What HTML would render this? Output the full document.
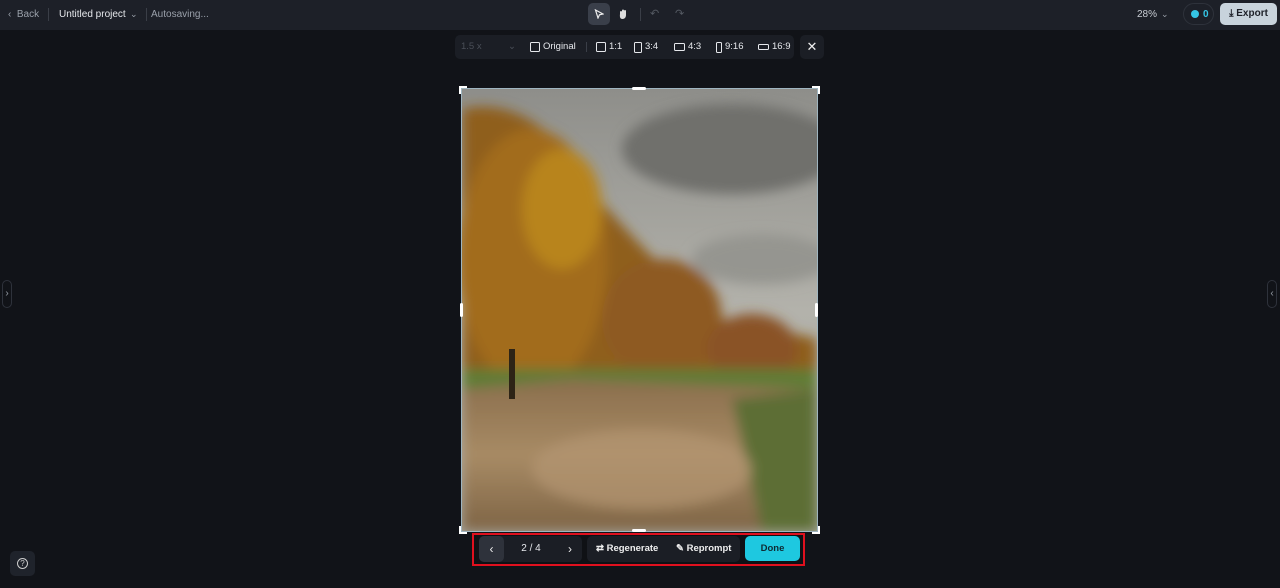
<!DOCTYPE html>
<html><head><meta charset="utf-8"><style>
*{box-sizing:border-box;margin:0;padding:0}
body{width:1280px;height:588px;background:#111318;font-family:"Liberation Sans",sans-serif;position:relative;overflow:hidden;color:#e6e8ec}
.top{position:absolute;left:0;top:0;width:1280px;height:30px;background:#1d2028}
.t{position:absolute;font-size:10px;top:9px}
.sep{position:absolute;top:8px;width:1px;height:13px;background:#3a3e47}
.bar2{position:absolute;left:455px;top:35px;width:339px;height:24px;background:#1b1e25;border-radius:5px}
.x{position:absolute;left:800px;top:35px;width:24px;height:24px;background:#1b1e25;border-radius:5px;color:#eee;font-size:13px;text-align:center;line-height:24px}
.opt{position:absolute;top:41px;font-size:9.5px;color:#e6e8ec;line-height:12px;display:flex;align-items:center}
.ic{display:inline-block;border:1.3px solid #e6e8ec;border-radius:1.5px;margin-right:3px}
.bb{position:absolute;top:536px;height:26px;border-radius:5px}
</style></head><body>
<div class="top"></div>
<div class="t" style="left:8px;color:#9aa0aa">‹ &nbsp;Back</div>
<div class="sep" style="left:48px"></div>
<div class="t" style="left:59px;color:#e6e8ec">Untitled project</div>
<div class="t" style="left:130px;color:#9aa0aa;font-size:9px">⌄</div>
<div class="sep" style="left:146px"></div>
<div class="t" style="left:151px;color:#9aa0aa">Autosaving...</div>
<div style="position:absolute;left:588px;top:3px;width:22px;height:22px;background:#3a3f4a;border-radius:5px"></div>
<svg style="position:absolute;left:594px;top:9px" width="10" height="10" viewBox="0 0 10 10"><path d="M1.5 1L9 5 5.5 5.8 4 9z" fill="none" stroke="#eee" stroke-width="1.2"/></svg>
<svg style="position:absolute;left:618px;top:8px" width="11" height="12" viewBox="0 0 11 12"><path d="M2 6V4a1 1 0 012 0V2.5a1 1 0 012 0V3a1 1 0 012 0v4c0 2.5-1.5 4-3.5 4S1.5 9.5 2 6z" fill="#ddd"/></svg>
<div class="sep" style="left:640px"></div>
<div class="t" style="left:650px;color:#555a63;top:7px;font-size:11px">↶</div>
<div class="t" style="left:675px;color:#555a63;top:7px;font-size:11px">↷</div>
<div class="t" style="left:1137px;color:#c8ccd3">28%</div>
<div class="t" style="left:1161px;color:#9aa0aa;font-size:9px">⌄</div>
<div style="position:absolute;left:1183px;top:3px;width:31px;height:22px;border:1px solid #2e323b;border-radius:11px"></div>
<div style="position:absolute;left:1191px;top:10px;width:8px;height:8px;border-radius:50%;background:#35c6e6"></div>
<div class="t" style="left:1203px;color:#35c6e6;font-weight:bold">0</div>
<div style="position:absolute;left:1220px;top:3px;width:57px;height:22px;background:#c8d3dc;border-radius:5px;color:#1d2028;font-size:10px;font-weight:bold;line-height:22px;text-align:center">⤓ Export</div>

<div class="bar2"></div>
<div class="opt" style="left:461px;color:#4a4f58">1.5 x</div>
<div class="opt" style="left:508px;color:#4a4f58">⌄</div>
<div class="opt" style="left:530px"><span class="ic" style="width:10px;height:10px"></span>Original</div>
<div class="sep" style="left:586px;top:42px;height:10px"></div>
<div class="opt" style="left:596px"><span class="ic" style="width:10px;height:10px"></span>1:1</div>
<div class="opt" style="left:634px"><span class="ic" style="width:8px;height:11px"></span>3:4</div>
<div class="opt" style="left:674px"><span class="ic" style="width:11px;height:8px"></span>4:3</div>
<div class="opt" style="left:716px"><span class="ic" style="width:6px;height:11px"></span>9:16</div>
<div class="opt" style="left:758px"><span class="ic" style="width:11px;height:6px"></span>16:9</div>
<div class="x">✕</div>

<svg style="position:absolute;left:462px;top:89px" width="355" height="442" viewBox="0 0 355 442">
<defs><filter id="b" x="-20%" y="-20%" width="140%" height="140%"><feGaussianBlur stdDeviation="6"/></filter>
<linearGradient id="sky" x1="0" y1="0" x2="0" y2="1"><stop offset="0" stop-color="#8e8e8a"/><stop offset=".5" stop-color="#b3b2ab"/><stop offset="1" stop-color="#a8a79f"/></linearGradient>
<linearGradient id="road" x1="0" y1="0" x2="0" y2="1"><stop offset="0" stop-color="#8a6e4c"/><stop offset=".5" stop-color="#a88b65"/><stop offset="1" stop-color="#7e6445"/></linearGradient></defs>
<rect width="355" height="442" fill="url(#sky)"/>
<g filter="url(#b)">
<ellipse cx="270" cy="60" rx="110" ry="45" fill="#6f6f6c"/>
<ellipse cx="300" cy="170" rx="70" ry="25" fill="#959590"/>
<path d="M0 20 C40 10 90 30 120 90 C170 150 220 200 260 230 C300 240 340 245 355 250 L355 300 L0 300Z" fill="#8f5f1c"/>
<ellipse cx="70" cy="170" rx="75" ry="130" fill="#a26c1e"/>
<ellipse cx="100" cy="120" rx="40" ry="60" fill="#b8841f"/>
<ellipse cx="200" cy="230" rx="60" ry="60" fill="#8e5a22"/>
<ellipse cx="290" cy="260" rx="45" ry="35" fill="#8a5226"/>
<path d="M0 280 L355 280 L355 315 L0 315Z" fill="#5f7d36"/>
<path d="M0 300 L110 290 L355 300 L355 442 L0 442Z" fill="url(#road)"/>
<path d="M270 310 L355 300 L355 442 L300 442Z" fill="#5d6e35"/>
<ellipse cx="180" cy="380" rx="110" ry="40" fill="#b39672" opacity=".7"/>
</g>
<rect x="47" y="260" width="6" height="50" fill="#2d2416"/>
</svg>
<div style="position:absolute;left:461px;top:88px;width:357px;height:444px;border:1px solid #9fb5c0"></div>
<div style="position:absolute;left:459px;top:86px;width:8px;height:8px;border-left:2px solid #fff;border-top:2px solid #fff"></div>
<div style="position:absolute;left:812px;top:86px;width:8px;height:8px;border-right:2px solid #fff;border-top:2px solid #fff"></div>
<div style="position:absolute;left:459px;top:526px;width:8px;height:8px;border-left:2px solid #fff;border-bottom:2px solid #fff"></div>
<div style="position:absolute;left:812px;top:526px;width:8px;height:8px;border-right:2px solid #fff;border-bottom:2px solid #fff"></div>
<div style="position:absolute;left:632px;top:87px;width:14px;height:3px;background:#fff;border-radius:2px"></div>
<div style="position:absolute;left:632px;top:529px;width:14px;height:3px;background:#fff;border-radius:2px"></div>
<div style="position:absolute;left:460px;top:303px;width:3px;height:14px;background:#fff;border-radius:2px"></div>
<div style="position:absolute;left:815px;top:303px;width:3px;height:14px;background:#fff;border-radius:2px"></div>

<div style="position:absolute;left:472px;top:533px;width:333px;height:33px;border:2.5px solid #e0101e;background:#0f1115"></div>
<div class="bb" style="left:479px;width:103px;background:#1b1e25"></div>
<div class="bb" style="left:479px;width:25px;background:#2e323b;color:#eee;text-align:center;line-height:26px;font-size:12px">‹</div>
<div class="bb" style="left:504px;width:54px;color:#e6e8ec;text-align:center;line-height:26px;font-size:10px">2 / 4</div>
<div class="bb" style="left:558px;width:24px;color:#eee;text-align:center;line-height:26px;font-size:12px">›</div>
<div class="bb" style="left:587px;width:153px;background:#1b1e25"></div>
<div class="bb" style="left:596px;color:#eee;line-height:26px;font-size:9.5px;font-weight:bold">⇄ Regenerate</div>
<div class="bb" style="left:676px;color:#eee;line-height:26px;font-size:9.5px;font-weight:bold">✎ Reprompt</div>
<div class="bb" style="left:745px;width:55px;height:25px;background:#1ec8e0;color:#0e2a33;text-align:center;line-height:25px;font-size:9.5px;font-weight:bold">Done</div>

<div style="position:absolute;left:2px;top:280px;width:10px;height:28px;border:1px solid #2e323b;border-radius:5px;color:#9aa0aa;font-size:10px;line-height:26px;text-align:center">›</div>
<div style="position:absolute;left:1267px;top:280px;width:10px;height:28px;border:1px solid #2e323b;border-radius:5px;color:#9aa0aa;font-size:10px;line-height:26px;text-align:center">‹</div>
<div style="position:absolute;left:10px;top:551px;width:25px;height:25px;background:#1f232b;border-radius:5px"></div>
<div style="position:absolute;left:17px;top:558px;width:11px;height:11px;border:1.3px solid #ccc;border-radius:50%;color:#ccc;font-size:8px;line-height:9px;text-align:center">?</div>
</body></html>
